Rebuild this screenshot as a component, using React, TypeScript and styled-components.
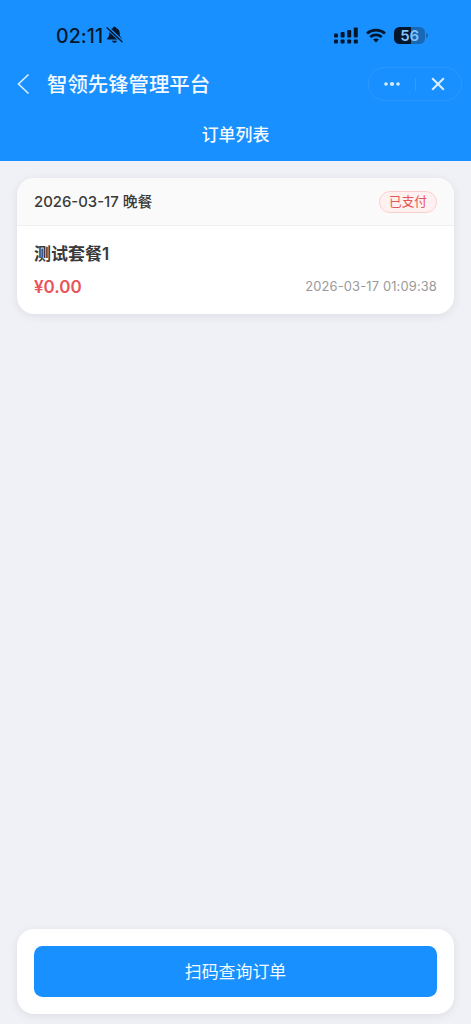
import React from "react";
import styled, { createGlobalStyle } from "styled-components";

const Global = createGlobalStyle`
  * { box-sizing: border-box; }
  html, body { margin: 0; padding: 0; background: #eff1f6; }
  body { font-family: Inter, "Noto Sans CJK SC", sans-serif; -webkit-font-smoothing: antialiased; }
`;

const Page = styled.div`
  width: 100%;
  height: 1024px;
  display: flex;
  flex-direction: column;
  overflow: hidden;
  background: #eff1f6;
`;

const Header = styled.header`
  height: 161px;
  flex: none;
  background: #1890ff;
  color: #f4faff;
`;

const StatusBar = styled.div`
  height: 60px;
  padding: 10px 46px 0 56px;
  display: flex;
  align-items: center;
  justify-content: space-between;
  color: #04162b;
`;

const StatusGroup = styled.div<{ $gap: number }>`
  display: flex;
  align-items: center;
  gap: ${(p) => p.$gap}px;
`;

const Clock = styled.span`
  padding-top: 1px;
  font-size: 19.5px;
  line-height: 24px;
  font-weight: 500;
  letter-spacing: 0.1px;
`;

const Battery = styled.div`
  position: relative;
  width: 31px;
  height: 17px;
  border-radius: 5.5px;
  background: linear-gradient(90deg, #04162b 56%, #1769b5 56%);
  color: #86c2fa;
  font-size: 15px;
  font-weight: 600;
  line-height: 17px;
  text-align: center;
  letter-spacing: -0.3px;

  &::after {
    content: "";
    position: absolute;
    right: -2.5px;
    top: 6px;
    width: 1.5px;
    height: 5px;
    border-radius: 0 2px 2px 0;
    background: #1769b5;
  }
`;

const NavBar = styled.div`
  height: 48px;
  padding: 0 9px 0 16px;
  display: flex;
  align-items: center;
`;

const AppTitle = styled.h1`
  flex: 1;
  margin: 0 0 0 16px;
  padding-top: 2px;
  font-size: 20.4px;
  line-height: 28px;
  font-weight: 500;
`;

const Capsule = styled.div`
  width: 94px;
  height: 34px;
  border: 1px solid #2c98ff;
  border-radius: 17px;
  display: flex;
  align-items: center;
`;

const CapsuleButton = styled.span`
  flex: 1;
  display: flex;
  align-items: center;
  justify-content: center;
`;

const CapsuleDivider = styled.span`
  width: 1px;
  height: 13px;
  background: #339bff;
`;

const PageTitle = styled.h2`
  margin: 0;
  height: 53px;
  line-height: 54px;
  text-align: center;
  font-size: 16.9px;
  font-weight: 500;
`;

const Content = styled.main`
  flex: 1;
  padding: 17px 17px 0;
`;

const Panel = styled.section`
  background: #fff;
  border-radius: 17px;
  box-shadow: 0 2px 10px rgba(0, 0, 0, 0.08);
`;

const OrderCard = styled(Panel)`
  height: 136px;
  overflow: hidden;
`;

const CardHead = styled.div`
  height: 48px;
  padding: 0 17px;
  display: flex;
  align-items: center;
  justify-content: space-between;
  background: #fafafa;
  border-bottom: 1px solid #f0f0f0;
`;

const MealDate = styled.span`
  padding-top: 1px;
  font-size: 14.9px;
  line-height: 20px;
  font-weight: 500;
  color: #3a3a3a;
`;

const Tag = styled.span`
  width: 58px;
  height: 22px;
  border: 1px solid #fbcfcf;
  border-radius: 11px;
  background: #fff1f0;
  color: #e25558;
  font-size: 12.7px;
  line-height: 19px;
  text-align: center;
`;

const CardBody = styled.div`
  padding: 16px 17px 0;
`;

const MealName = styled.div`
  font-size: 17px;
  line-height: 24px;
  font-weight: 600;
  color: #3a3a3a;
`;

const InfoRow = styled.div`
  margin-top: 9px;
  display: flex;
  align-items: center;
  justify-content: space-between;
`;

const Price = styled.span`
  font-size: 17px;
  line-height: 24px;
  font-weight: 600;
  color: #e9545b;
`;

const Time = styled.span`
  font-size: 12.9px;
  line-height: 20px;
  letter-spacing: 0.15px;
  color: #999;
`;

const ScanPanel = styled(Panel)`
  flex: none;
  height: 85px;
  margin: 0 17px 10px;
  padding: 17px;
`;

const ScanButton = styled.button`
  display: block;
  width: 100%;
  height: 51px;
  padding: 0;
  border: 0;
  border-radius: 8.5px;
  background: #1890ff;
  color: #f4faff;
  font-family: inherit;
  font-size: 16.9px;
  line-height: 50px;
`;

const MutedBell = () => (
  <svg width="17" height="18" viewBox="0 0 17 18" fill="none">
    <path d="M8.500 .8c1 0 1.700.6 1.900 1.500 2.200.7 3.300 2.500 3.300 4.700 0 3 .7 3.900 1.900 5 .6.6.3 1.600-.6 1.600H2c-.9 0-1.200-1-.6-1.600C2.600 10.900 3.300 10 3.300 7c0-2.200 1.100-4 3.300-4.700C6.800 1.400 7.500.8 8.500.8z" fill="#04162b" />
    <path d="M6 14.800h5c-.2 1.200-1.200 2-2.500 2s-2.300-.8-2.500-2z" fill="#04162b" />
    <path d="M1.800 .9L17 14.900" stroke="#1890ff" strokeWidth="1.500" />
    <path d="M0 2.200L15.200 16.200" stroke="#1890ff" strokeWidth="1.200" />
    <path d="M1 1.700L16 15.700" stroke="#04162b" strokeWidth="1.300" strokeLinecap="round" />
  </svg>
);

const Signal = () => (
  <svg width="24" height="17" viewBox="0 0 24 17" fill="#04162b">
    <rect x="0" y="6.500" width="4" height="4" rx="1" />
    <rect x="6.600" y="5" width="4" height="5.500" rx="1" />
    <rect x="13.200" y="3" width="4" height="7.500" rx="1" />
    <rect x="19.800" y="0.500" width="4" height="10" rx="1" />
    <rect x="0" y="12.500" width="4" height="4" rx="1" />
    <rect x="6.600" y="12.500" width="4" height="4" rx="1" />
    <rect x="13.200" y="12.500" width="4" height="4" rx="1" />
    <rect x="19.800" y="12.500" width="4" height="4" rx="1" />
  </svg>
);

const Wifi = () => (
  <svg width="20" height="15" viewBox="0 0 20 15" fill="none" stroke="#04162b" strokeWidth="2.700">
    <path d="M1 5.400C6 .9 14 .9 19 5.400" />
    <path d="M4.300 9C7.500 6.200 12.500 6.200 15.700 9" />
    <path d="M10 14.500L7.100 11.500c1.600-1.400 4.200-1.400 5.800 0z" fill="#04162b" stroke="none" />
  </svg>
);

export default function App() {
  return (
    <Page>
      <Global />
      <Header>
        <StatusBar>
          <StatusGroup $gap={3}>
            <Clock>02:11</Clock>
            <MutedBell />
          </StatusGroup>
          <StatusGroup $gap={8}>
            <Signal />
            <Wifi />
            <Battery>56</Battery>
          </StatusGroup>
        </StatusBar>
        <NavBar>
          <svg width="15" height="22" viewBox="0 0 15 22" fill="none" stroke="#d9edff" strokeWidth="1.600">
            <path d="M12.500 1.500L2.500 11l10 9.500" />
          </svg>
          <AppTitle>智领先锋管理平台</AppTitle>
          <Capsule>
            <CapsuleButton>
              <svg width="18" height="6" viewBox="0 0 18 6" fill="#d9edff">
                <circle cx="3" cy="3" r="1.800" />
                <circle cx="9" cy="3" r="2.100" />
                <circle cx="15" cy="3" r="1.800" />
              </svg>
            </CapsuleButton>
            <CapsuleDivider />
            <CapsuleButton>
              <svg width="14" height="14" viewBox="0 0 14 14" stroke="#d9edff" strokeWidth="2.100">
                <path d="M1.200 1.200l11.600 11.600M12.800 1.200L1.200 12.800" />
              </svg>
            </CapsuleButton>
          </Capsule>
        </NavBar>
        <PageTitle>订单列表</PageTitle>
      </Header>
      <Content>
        <OrderCard>
          <CardHead>
            <MealDate>2026-03-17 晚餐</MealDate>
            <Tag>已支付</Tag>
          </CardHead>
          <CardBody>
            <MealName>测试套餐1</MealName>
            <InfoRow>
              <Price>¥0.00</Price>
              <Time>2026-03-17 01:09:38</Time>
            </InfoRow>
          </CardBody>
        </OrderCard>
      </Content>
      <ScanPanel>
        <ScanButton>扫码查询订单</ScanButton>
      </ScanPanel>
    </Page>
  );
}
